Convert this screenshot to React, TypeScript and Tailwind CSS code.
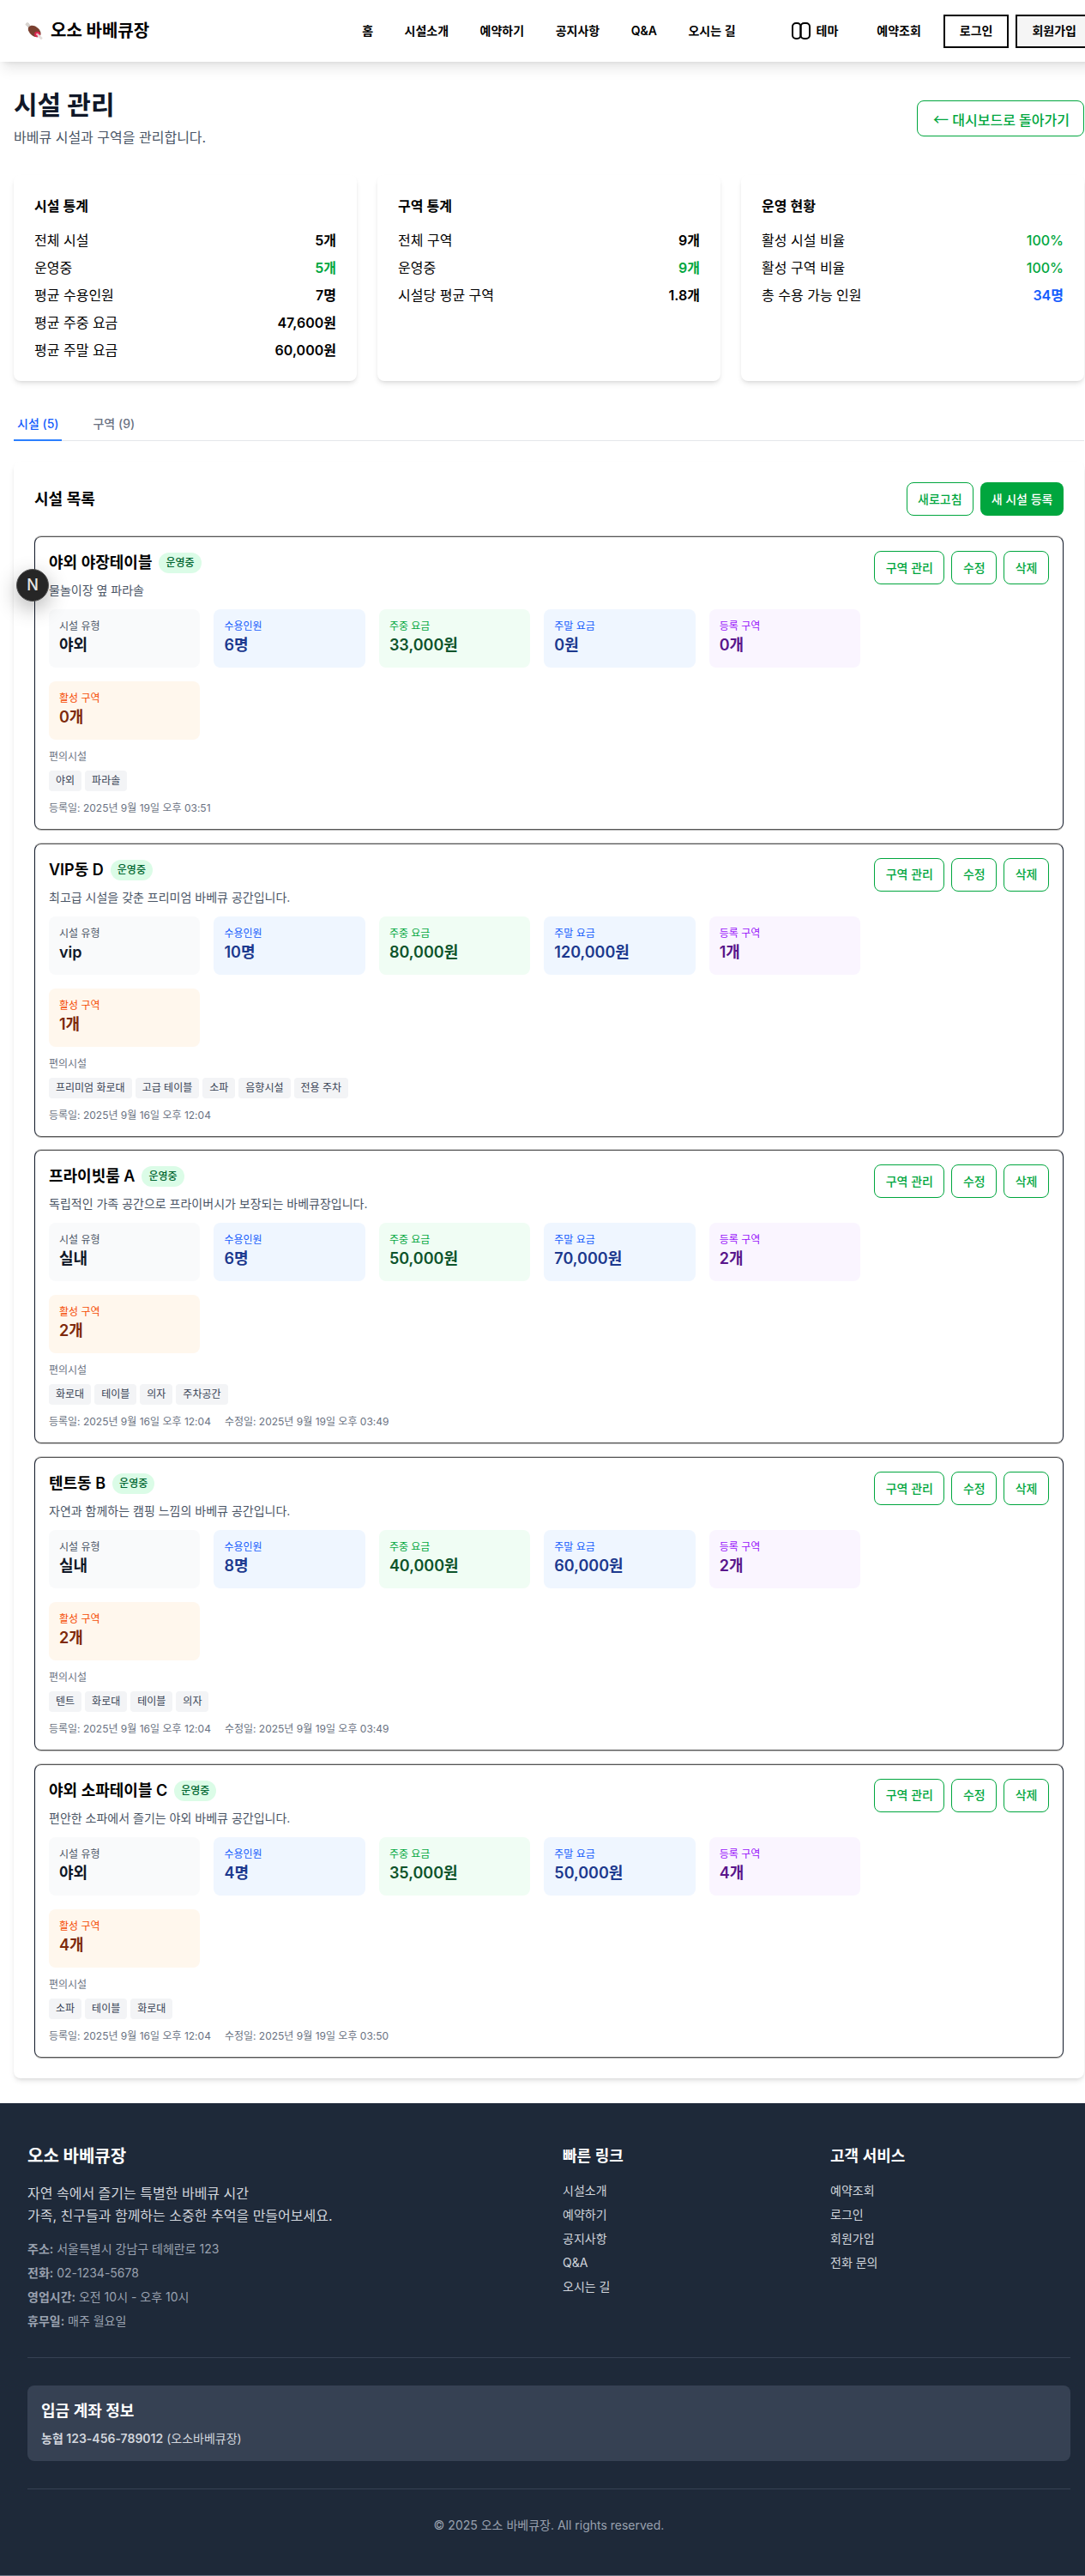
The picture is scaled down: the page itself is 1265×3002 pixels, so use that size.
const facilities = [
  {
    name: '야외 야장테이블',
    desc: '물놀이장 옆 파라솔',
    type: '야외',
    capacity: '6명',
    weekday: '33,000원',
    weekend: '0원',
    zones: '0개',
    activeZones: '0개',
    amenities: ['야외', '파라솔'],
    created: '등록일: 2025년 9월 19일 오후 03:51',
    updated: '',
  },
  {
    name: 'VIP동 D',
    desc: '최고급 시설을 갖춘 프리미엄 바베큐 공간입니다.',
    type: 'vip',
    capacity: '10명',
    weekday: '80,000원',
    weekend: '120,000원',
    zones: '1개',
    activeZones: '1개',
    amenities: ['프리미엄 화로대', '고급 테이블', '소파', '음향시설', '전용 주차'],
    created: '등록일: 2025년 9월 16일 오후 12:04',
    updated: '',
  },
  {
    name: '프라이빗룸 A',
    desc: '독립적인 가족 공간으로 프라이버시가 보장되는 바베큐장입니다.',
    type: '실내',
    capacity: '6명',
    weekday: '50,000원',
    weekend: '70,000원',
    zones: '2개',
    activeZones: '2개',
    amenities: ['화로대', '테이블', '의자', '주차공간'],
    created: '등록일: 2025년 9월 16일 오후 12:04',
    updated: '수정일: 2025년 9월 19일 오후 03:49',
  },
  {
    name: '텐트동 B',
    desc: '자연과 함께하는 캠핑 느낌의 바베큐 공간입니다.',
    type: '실내',
    capacity: '8명',
    weekday: '40,000원',
    weekend: '60,000원',
    zones: '2개',
    activeZones: '2개',
    amenities: ['텐트', '화로대', '테이블', '의자'],
    created: '등록일: 2025년 9월 16일 오후 12:04',
    updated: '수정일: 2025년 9월 19일 오후 03:49',
  },
  {
    name: '야외 소파테이블 C',
    desc: '편안한 소파에서 즐기는 야외 바베큐 공간입니다.',
    type: '야외',
    capacity: '4명',
    weekday: '35,000원',
    weekend: '50,000원',
    zones: '4개',
    activeZones: '4개',
    amenities: ['소파', '테이블', '화로대'],
    created: '등록일: 2025년 9월 16일 오후 12:04',
    updated: '수정일: 2025년 9월 19일 오후 03:50',
  },
]

const statCards = [
  {
    title: '시설 통계',
    rows: [
      ['전체 시설', '5개', 'font-semibold text-black'],
      ['운영중', '5개', 'font-semibold text-green-600'],
      ['평균 수용인원', '7명', 'font-semibold text-black'],
      ['평균 주중 요금', '47,600원', 'font-semibold text-black'],
      ['평균 주말 요금', '60,000원', 'font-semibold text-black'],
    ],
  },
  {
    title: '구역 통계',
    rows: [
      ['전체 구역', '9개', 'font-semibold text-black'],
      ['운영중', '9개', 'font-semibold text-green-600'],
      ['시설당 평균 구역', '1.8개', 'font-semibold text-black'],
    ],
  },
  {
    title: '운영 현황',
    rows: [
      ['활성 시설 비율', '100%', 'font-medium text-green-600'],
      ['활성 구역 비율', '100%', 'font-medium text-green-600'],
      ['총 수용 가능 인원', '34명', 'font-semibold text-blue-600'],
    ],
  },
]

function MeatIcon() {
  return (
    <svg width="22" height="22" viewBox="0 0 22 22" className="block">
      <path d="M5 6 L3 3" stroke="#cfcac6" strokeWidth="3.5" strokeLinecap="round" />
      <ellipse cx="3" cy="3.5" rx="2.4" ry="1.8" fill="#d8d4d0" />
      <path d="M4.5 6.5 C7 3.5 12 4.5 15.5 8 C19 11.5 19.5 15.5 17 17.5 C14 19.5 9 17.5 6.5 14.5 C4 11.5 3 8.5 4.5 6.5 Z" fill="#7a4030" />
      <ellipse cx="14.5" cy="15" rx="3.4" ry="3.2" fill="#d8274f" />
      <ellipse cx="14.5" cy="15" rx="1.4" ry="1.3" fill="#f3b6c4" />
      <path d="M16 16.5 L19 19.5" stroke="#e4e0dc" strokeWidth="3" strokeLinecap="round" />
    </svg>
  )
}

function ThemeIcon() {
  return (
    <svg width="22" height="20" viewBox="0 0 22 20" fill="none" stroke="#000" strokeWidth="2" className="block">
      <rect x="1" y="1" width="9.5" height="18" rx="4" />
      <rect x="10.5" y="1" width="10.5" height="18" rx="4" />
    </svg>
  )
}

function Header() {
  return (
    <header className="h-[72px] bg-white shadow-lg flex items-center pl-[29px] pr-[6px] relative">
      <div className="flex items-center gap-2">
        <MeatIcon />
        <span className="text-xl font-bold text-black">오소 바베큐장</span>
      </div>
      <nav className="ml-auto flex items-center gap-[36.5px] text-sm font-semibold text-black">
        <span>홈</span>
        <span>시설소개</span>
        <span>예약하기</span>
        <span>공지사항</span>
        <span>Q&amp;A</span>
        <span>오시는 길</span>
      </nav>
      <div className="ml-[65px] flex items-center gap-[7px] text-sm font-semibold text-black">
        <ThemeIcon />
        <span>테마</span>
      </div>
      <span className="ml-[45px] text-sm font-semibold text-black">예약조회</span>
      <button className="ml-[26px] border-2 border-black bg-white px-[17px] h-[39px] text-sm font-semibold text-black">로그인</button>
      <button className="ml-2 border-2 border-black bg-neutral-100 px-[17px] h-[39px] text-sm font-semibold text-black">회원가입</button>
    </header>
  )
}

function Tile({ label, value, bg, labelColor, valueColor }: { label: string; value: string; bg: string; labelColor: string; valueColor: string }) {
  return (
    <div className={`${bg} rounded-lg p-3`}>
      <div className={`text-xs ${labelColor}`}>{label}</div>
      <div className={`text-lg font-semibold ${valueColor}`}>{value}</div>
    </div>
  )
}

function OutlineButton({ children }: { children: string }) {
  return (
    <button className="px-[12.5px] h-[39px] border border-green-600 rounded-lg text-sm font-medium text-green-600 bg-white">
      {children}
    </button>
  )
}

function FacilityCard({ f }: { f: (typeof facilities)[number] }) {
  return (
    <div className="border border-x-gray-900 border-y-[#555] rounded-lg p-4 mb-[15.7px] last:mb-0 flex items-start justify-between shadow-[0_1px_0_#bbb,0_-1px_0_#ccc]">
      <div className="flex-1">
        <div className="flex items-center gap-2 mb-2">
          <h3 className="text-lg font-semibold text-black">{f.name}</h3>
          <span className="px-2 py-1 rounded-full bg-green-100 text-green-800 text-xs font-medium">운영중</span>
        </div>
        <p className="text-sm text-gray-600 mb-3">{f.desc}</p>
        <div className="grid grid-cols-5 gap-4 mb-3">
          <Tile label="시설 유형" value={f.type} bg="bg-gray-50" labelColor="text-gray-600" valueColor="text-gray-900" />
          <Tile label="수용인원" value={f.capacity} bg="bg-blue-50" labelColor="text-blue-600" valueColor="text-blue-900" />
          <Tile label="주중 요금" value={f.weekday} bg="bg-green-50" labelColor="text-green-600" valueColor="text-green-900" />
          <Tile label="주말 요금" value={f.weekend} bg="bg-blue-50" labelColor="text-blue-600" valueColor="text-blue-900" />
          <Tile label="등록 구역" value={f.zones} bg="bg-purple-50" labelColor="text-purple-600" valueColor="text-purple-900" />
          <Tile label="활성 구역" value={f.activeZones} bg="bg-orange-50" labelColor="text-orange-600" valueColor="text-orange-900" />
        </div>
        <div className="text-xs text-gray-500 mb-2">편의시설</div>
        <div className="flex gap-1 mb-3">
          {f.amenities.map((a) => (
            <span key={a} className="px-2 py-1 rounded bg-gray-100 text-gray-700 text-xs">{a}</span>
          ))}
        </div>
        <div className="flex gap-4 text-xs text-gray-500">
          <span>{f.created}</span>
          {f.updated && <span>{f.updated}</span>}
        </div>
      </div>
      <div className="ml-4 flex gap-2">
        <OutlineButton>구역 관리</OutlineButton>
        <OutlineButton>수정</OutlineButton>
        <OutlineButton>삭제</OutlineButton>
      </div>
    </div>
  )
}

function Footer() {
  return (
    <footer className="mt-[29px] bg-gray-800 px-8 pt-12 pb-12 border-b border-gray-500">
      <div className="grid grid-cols-4 gap-8 mb-8">
        <div className="col-span-2">
          <h3 className="text-xl font-bold text-white mb-4">오소 바베큐장</h3>
          <p className="text-gray-300 leading-relaxed mb-4">
            자연 속에서 즐기는 특별한 바베큐 시간
            <br />
            가족, 친구들과 함께하는 소중한 추억을 만들어보세요.
          </p>
          <div className="space-y-2 text-sm text-gray-400">
            <p><strong className="font-semibold">주소:</strong> 서울특별시 강남구 테헤란로 123</p>
            <p><strong className="font-semibold">전화:</strong> 02-1234-5678</p>
            <p><strong className="font-semibold">영업시간:</strong> 오전 10시 - 오후 10시</p>
            <p><strong className="font-semibold">휴무일:</strong> 매주 월요일</p>
          </div>
        </div>
        <div>
          <h3 className="text-lg font-semibold text-white mb-4">빠른 링크</h3>
          <ul className="space-y-2 text-sm text-gray-300">
            <li>시설소개</li>
            <li>예약하기</li>
            <li>공지사항</li>
            <li>Q&amp;A</li>
            <li>오시는 길</li>
          </ul>
        </div>
        <div>
          <h3 className="text-lg font-semibold text-white mb-4">고객 서비스</h3>
          <ul className="space-y-2 text-sm text-gray-300">
            <li>예약조회</li>
            <li>로그인</li>
            <li>회원가입</li>
            <li>전화 문의</li>
          </ul>
        </div>
      </div>
      <div className="border-t border-gray-700 pt-8">
        <div className="bg-gray-700 rounded-lg p-4">
          <h4 className="text-lg font-semibold text-white mb-2">입금 계좌 정보</h4>
          <p className="text-sm text-gray-300"><strong className="font-semibold">농협 123-456-789012</strong> (오소바베큐장)</p>
        </div>
      </div>
      <div className="border-t border-gray-700 mt-8 pt-8 text-center text-sm text-gray-400">
        © 2025 오소 바베큐장. All rights reserved.
      </div>
    </footer>
  )
}

export default function App() {
  return (
    <div className="w-[1265px] overflow-hidden">
      <div className="relative w-[1280px] bg-white text-black font-['Inter','Noto_Sans_CJK_KR',sans-serif]">
        <Header />
        <main className="px-4 pt-8">
          <div className="flex items-start justify-between mb-8">
            <div>
              <h1 className="text-3xl font-bold text-gray-900 mb-2">시설 관리</h1>
              <p className="text-gray-600">바베큐 시설과 구역을 관리합니다.</p>
            </div>
            <button className="mt-[13px] pl-[18px] pr-4 h-[42px] border border-green-600 rounded-lg text-green-600 font-medium">
              <span className="text-lg font-normal font-['Noto_Sans_CJK_KR',sans-serif]">←</span> 대시보드로 돌아가기
            </button>
          </div>

          <div className="grid grid-cols-3 gap-6 mb-8">
            {statCards.map((c) => (
              <div key={c.title} className="bg-white rounded-lg shadow-md p-6">
                <h3 className="font-semibold mb-4">{c.title}</h3>
                <div className="space-y-2">
                  {c.rows.map(([label, value, color]) => (
                    <div key={label} className="flex justify-between">
                      <span>{label}</span>
                      <span className={color}>{value}</span>
                    </div>
                  ))}
                </div>
              </div>
            ))}
          </div>

          <div className="flex gap-8 border-b border-gray-200">
            <button className="px-1 py-2 -mb-px border-b-2 border-blue-500 text-sm font-medium text-blue-600">시설 (5)</button>
            <button className="px-1 py-2 -mb-px border-b-2 border-transparent text-sm font-medium text-gray-500">구역 (9)</button>
          </div>

          <section className="mt-6 bg-white rounded-lg shadow-md p-6">
            <div className="flex items-center justify-between mb-6">
              <h2 className="text-lg font-semibold">시설 목록</h2>
              <div className="flex gap-2">
                <OutlineButton>새로고침</OutlineButton>
                <button className="px-[12.5px] h-[39px] bg-green-600 rounded-lg text-sm font-medium text-white">새 시설 등록</button>
              </div>
            </div>
            {facilities.map((f) => (
              <FacilityCard key={f.name} f={f} />
            ))}
          </section>
        </main>
        <Footer />
        <div className="absolute left-[19px] top-[663px] w-[38px] h-[38px] rounded-full bg-neutral-800 border border-neutral-600 flex items-center justify-center text-neutral-200 text-lg font-medium shadow-[0_8px_24px_rgba(0,0,0,0.3)]">N</div>
      </div>
    </div>
  )
}
